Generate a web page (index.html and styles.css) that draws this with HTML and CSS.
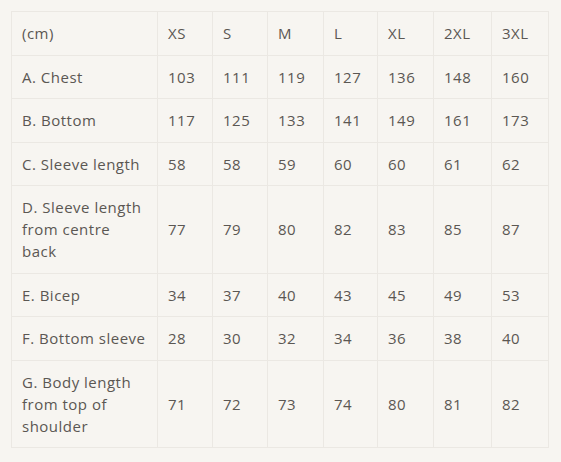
FILE: index.html
```html
<!DOCTYPE html>
<html>
<head>
<meta charset="utf-8">
<link rel="stylesheet" href="styles.css">
</head>
<body>
<table class="size-table">
  <colgroup>
    <col class="c-label">
    <col class="c-55">
    <col class="c-55">
    <col class="c-56">
    <col class="c-54">
    <col class="c-56">
    <col class="c-58">
    <col class="c-57">
  </colgroup>
  <tbody>
    <tr><td>(cm)</td><td>XS</td><td>S</td><td>M</td><td>L</td><td>XL</td><td>2XL</td><td>3XL</td></tr>
    <tr><td>A. Chest</td><td>103</td><td>111</td><td>119</td><td>127</td><td>136</td><td>148</td><td>160</td></tr>
    <tr><td>B. Bottom</td><td>117</td><td>125</td><td>133</td><td>141</td><td>149</td><td>161</td><td>173</td></tr>
    <tr><td>C. Sleeve length</td><td>58</td><td>58</td><td>59</td><td>60</td><td>60</td><td>61</td><td>62</td></tr>
    <tr><td>D. Sleeve length from centre back</td><td>77</td><td>79</td><td>80</td><td>82</td><td>83</td><td>85</td><td>87</td></tr>
    <tr><td>E. Bicep</td><td>34</td><td>37</td><td>40</td><td>43</td><td>45</td><td>49</td><td>53</td></tr>
    <tr><td>F. Bottom sleeve</td><td>28</td><td>30</td><td>32</td><td>34</td><td>36</td><td>38</td><td>40</td></tr>
    <tr><td>G. Body length from top of shoulder</td><td>71</td><td>72</td><td>73</td><td>74</td><td>80</td><td>81</td><td>82</td></tr>
  </tbody>
</table>
</body>
</html>
```
FILE: styles.css
```css
html, body {
  margin: 0;
  background: #f7f5f1;
}
body {
  padding: 11px;
  font-family: "Open Sans", "Noto Sans", sans-serif;
  font-size: 15px;
  letter-spacing: 0.5px;
  color: #5b5753;
}
.size-table {
  border-collapse: collapse;
  table-layout: fixed;
  width: 538px;
}
.c-label { width: 146px; }
.c-55 { width: 55px; }
.c-56 { width: 56px; }
.c-54 { width: 54px; }
.c-58 { width: 58px; }
.c-57 { width: 57px; }
.size-table td {
  border: 1px solid #ebe8e3;
  padding: 10px 10px 10.5px;
  line-height: 22px;
  vertical-align: middle;
  text-align: left;
}
```
